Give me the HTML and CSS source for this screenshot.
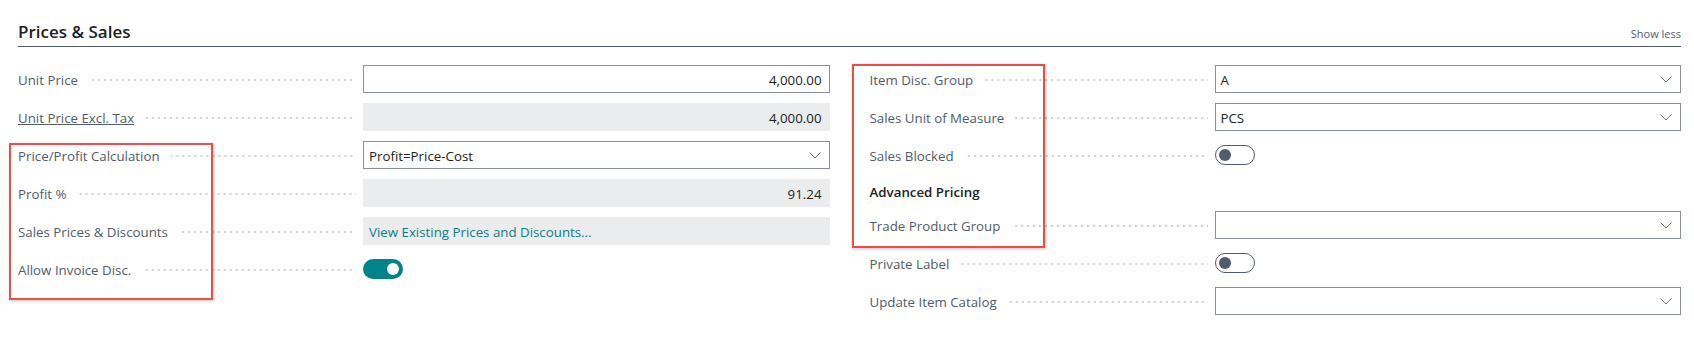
FILE: index.html
```html
<!DOCTYPE html>
<html>
<head>
    <title>Item Card - Prices &amp; Sales</title>
    <link rel="stylesheet" href="styles.css">
</head>
<body>
    <div class="page">
        <div class="section-header">
            <h2>Prices &amp; Sales</h2>
            <a class="show-less">Show less</a>
        </div>

        <div class="columns">
            <!-- left column -->
            <div class="col">
                <div class="field-row">
                    <div class="caption"><span>Unit Price</span><i class="dots"></i></div>
                    <div class="field number">4,000.00</div>
                </div>
                <div class="field-row">
                    <div class="caption"><span class="link-caption">Unit Price Excl. Tax</span><i class="dots"></i></div>
                    <div class="field readonly number">4,000.00</div>
                </div>
                <div class="field-row">
                    <div class="caption"><span>Price/Profit Calculation</span><i class="dots"></i></div>
                    <div class="field select">
                        <span>Profit=Price-Cost</span>
                        <svg class="chevron" width="12" height="7" viewBox="0 0 12 7"><path d="M0.5 0.5 L6 6 L11.5 0.5" fill="none" stroke="#6b7380" stroke-width="1"/></svg>
                    </div>
                </div>
                <div class="field-row">
                    <div class="caption"><span>Profit %</span><i class="dots"></i></div>
                    <div class="field readonly number">91.24</div>
                </div>
                <div class="field-row">
                    <div class="caption"><span>Sales Prices &amp; Discounts</span><i class="dots"></i></div>
                    <div class="field readonly drilldown">View Existing Prices and Discounts...</div>
                </div>
                <div class="field-row">
                    <div class="caption"><span>Allow Invoice Disc.</span><i class="dots"></i></div>
                    <div class="toggle-cell"><span class="toggle on"><b class="knob"></b></span></div>
                </div>
            </div>

            <!-- right column -->
            <div class="col">
                <div class="field-row">
                    <div class="caption"><span>Item Disc. Group</span><i class="dots"></i></div>
                    <div class="field select">
                        <span>A</span>
                        <svg class="chevron" width="12" height="7" viewBox="0 0 12 7"><path d="M0.5 0.5 L6 6 L11.5 0.5" fill="none" stroke="#6b7380" stroke-width="1"/></svg>
                    </div>
                </div>
                <div class="field-row">
                    <div class="caption"><span>Sales Unit of Measure</span><i class="dots"></i></div>
                    <div class="field select">
                        <span>PCS</span>
                        <svg class="chevron" width="12" height="7" viewBox="0 0 12 7"><path d="M0.5 0.5 L6 6 L11.5 0.5" fill="none" stroke="#6b7380" stroke-width="1"/></svg>
                    </div>
                </div>
                <div class="field-row">
                    <div class="caption"><span>Sales Blocked</span><i class="dots"></i></div>
                    <div class="toggle-cell"><span class="toggle off"><b class="knob"></b></span></div>
                </div>
                <div class="group-title">Advanced Pricing</div>
                <div class="field-row">
                    <div class="caption"><span>Trade Product Group</span><i class="dots"></i></div>
                    <div class="field select">
                        <span></span>
                        <svg class="chevron" width="12" height="7" viewBox="0 0 12 7"><path d="M0.5 0.5 L6 6 L11.5 0.5" fill="none" stroke="#6b7380" stroke-width="1"/></svg>
                    </div>
                </div>
                <div class="field-row">
                    <div class="caption"><span>Private Label</span><i class="dots"></i></div>
                    <div class="toggle-cell"><span class="toggle off"><b class="knob"></b></span></div>
                </div>
                <div class="field-row">
                    <div class="caption"><span>Update Item Catalog</span><i class="dots"></i></div>
                    <div class="field select">
                        <span></span>
                        <svg class="chevron" width="12" height="7" viewBox="0 0 12 7"><path d="M0.5 0.5 L6 6 L11.5 0.5" fill="none" stroke="#6b7380" stroke-width="1"/></svg>
                    </div>
                </div>
            </div>
        </div>

        <!-- annotation boxes drawn over the form -->
        <div class="mark mark-left"></div>
        <div class="mark mark-right"></div>
    </div>
</body>
</html>
```

FILE: styles.css
```css
body {
    margin: 0;
    font-family: "Open Sans", "Noto Sans", Arial, sans-serif;
    font-size: 13.3px;
    color: #212121;
    background-color: #fff;
}

.page {
    position: relative;
    padding: 0 13px 0 18px;
}

.section-header {
    display: flex;
    justify-content: space-between;
    align-items: baseline;
    padding-top: 20px;
    padding-bottom: 2px;
    border-bottom: 1px solid #505c6d;
}

.section-header h2 {
    margin: 0;
    font-size: 17px;
    line-height: 24px;
    font-weight: 600;
    color: #212121;
}

.show-less {
    font-size: 11px;
    color: #505c6d;
    cursor: pointer;
}

.columns {
    display: grid;
    grid-template-columns: 1fr 1fr;
    column-gap: 40px;
    padding-top: 18px;
}

.field-row {
    display: grid;
    grid-template-columns: 345px 1fr;
    height: 28px;
    margin-bottom: 10px;
}

.caption {
    display: flex;
    align-items: center;
    color: #505c6d;
    white-space: nowrap;
    padding-top: 1px;
}

.link-caption {
    text-decoration: underline;
}

.dots {
    flex: 1;
    height: 2px;
    margin: 0 7px 0 11px;
    background-image: linear-gradient(to right, #cfd2d6 2px, transparent 2px);
    background-size: 6px 2px;
    background-repeat: repeat-x;
    background-position: right top;
}

.field {
    display: flex;
    align-items: center;
    height: 28px;
    box-sizing: border-box;
    padding: 1px 7px 0 5px;
    border: 1px solid #8a919c;
    background-color: #fff;
    color: #212121;
}

.field.number {
    justify-content: flex-end;
}

.field.readonly {
    border-color: #ebecee;
    background-color: #ebecee;
}

.field.select {
    justify-content: space-between;
    padding-right: 8px;
}

.field.drilldown {
    color: #0f7c86;
}

.toggle-cell {
    display: flex;
    align-items: center;
}

.toggle {
    display: flex;
    align-items: center;
    width: 40px;
    height: 20px;
    box-sizing: border-box;
    padding: 0 4px;
    border-radius: 10px;
}

.toggle.on {
    justify-content: flex-end;
    background-color: #008489;
}

.toggle.off {
    justify-content: flex-start;
    border: 1px solid #505c6d;
    padding: 0 3px;
}

.knob {
    width: 12px;
    height: 12px;
    border-radius: 50%;
}

.toggle.on .knob {
    background-color: #fff;
}

.toggle.off .knob {
    background-color: #505c6d;
}

.group-title {
    height: 26px;
    line-height: 26px;
    margin-bottom: 6px;
    font-weight: 600;
    color: #212121;
}

.mark {
    position: absolute;
    border: 2px solid #f24b4b;
    box-shadow: 1px 1px 3px rgba(0, 0, 0, 0.25);
    pointer-events: none;
}

.mark-left {
    left: 9px;
    top: 143px;
    width: 200px;
    height: 153px;
}

.mark-right {
    left: 852px;
    top: 64px;
    width: 189px;
    height: 180px;
}
```
